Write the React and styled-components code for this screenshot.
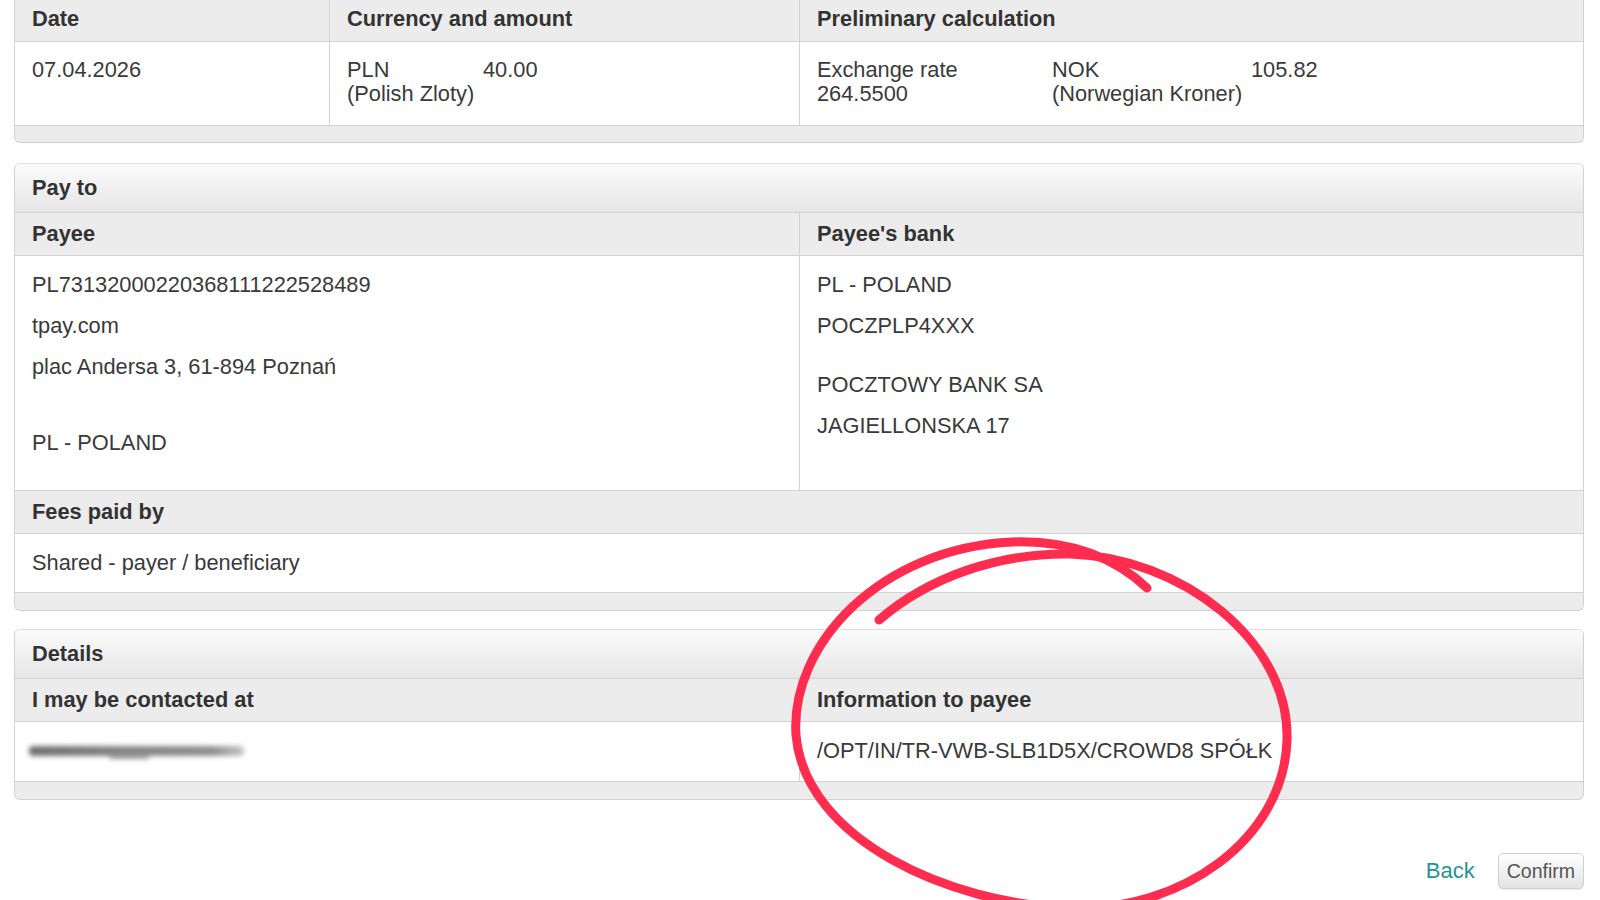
import React from "react";
import styled, { createGlobalStyle } from "styled-components";

const Global = createGlobalStyle`
  html, body { margin: 0; padding: 0; background: #ffffff; }
  body {
    font-family: "Liberation Sans", Arial, Helvetica, sans-serif;
    font-size: 21.8px;
    color: #383838;
  }
`;

const Page = styled.div`
  position: relative;
  box-sizing: border-box;
  width: 1600px;
  height: 900px;
  overflow: hidden;
  padding: 0 16px 0 14px;
  line-height: 24px;
`;

const Panel = styled.section`
  border: 1px solid #d2d2d2;
  border-top: ${(p) => (p.$clipped ? "none" : "1px solid #dedede")};
  border-radius: ${(p) => (p.$clipped ? "0 0 6px 6px" : "6px")};
  background: #ececec;
  overflow: hidden;
  margin-top: ${(p) => p.$gap || 0}px;
`;

const PanelTitle = styled.div`
  padding: 12px 17px 12px;
  background: linear-gradient(#fbfbfb, #e6e6e6);
  border-bottom: 1px solid #d2d2d2;
  font-weight: bold;
  color: #333;
`;

const Row = styled.div`
  display: grid;
  grid-template-columns: ${(p) => p.$cols || "1fr"};
  border-bottom: 1px solid #d2d2d2;
  background: ${(p) => (p.$head ? "#ececec" : "#ffffff")};
  font-weight: ${(p) => (p.$head ? "bold" : "normal")};
  color: ${(p) => (p.$head ? "#333" : "#3a3a3a")};
`;

const Cell = styled.div`
  padding: ${(p) => p.$pad || "9px 17px"};
  display: flex;
  flex-direction: column;
  justify-content: ${(p) => (p.$center ? "center" : "flex-start")};
  gap: ${(p) => p.$gap || 0}px;
  & + & {
    border-left: 1px solid #d2d2d2;
  }
`;

const Footer = styled.div`
  height: ${(p) => p.$h || 16}px;
`;

const Pair = styled.div`
  display: grid;
  grid-template-columns: ${(p) => p.$cols};
`;

const Line = styled.div`
  white-space: nowrap;
`;

const Spacer = styled.div`
  height: ${(p) => p.$h}px;
`;

const BlurWrap = styled.div`
  position: relative;
  width: 215px;
  height: 16px;
  margin-left: -3px;
  filter: blur(2.6px);
`;

const BlurBar = styled.span`
  display: block;
  height: 10px;
  margin-top: 3px;
  border-radius: 4px;
  background: linear-gradient(90deg, #707070, #858585 45%, #8e8e8e 85%, #c6c6c6);
`;

const BlurDot = styled.span`
  position: absolute;
  left: 80px;
  top: 11px;
  width: 40px;
  height: 5px;
  border-radius: 3px;
  background: #9a9a9a;
`;

const Actions = styled.div`
  margin-top: 53px;
  display: flex;
  justify-content: flex-end;
  align-items: center;
  gap: 23px;
`;

const BackLink = styled.a`
  color: #23968f;
  font-size: 22px;
  text-decoration: none;
  cursor: pointer;
`;

const ConfirmButton = styled.button`
  height: 36px;
  padding: 0 8px;
  font-family: "Liberation Sans", Arial, sans-serif;
  font-size: 19.5px;
  color: #555;
  border: 1px solid #d0d0d0;
  border-radius: 5px;
  background: linear-gradient(#ffffff, #e3e3e3);
  box-shadow: 0 1px 1px rgba(0, 0, 0, 0.08);
`;

const Overlay = styled.svg`
  position: absolute;
  left: 0;
  top: 0;
  width: 1600px;
  height: 900px;
  pointer-events: none;
`;

export default function App() {
  return (
    <>
      <Global />
      <Page>
        <Panel $clipped>
          <Row $head $cols="314px 470px 1fr">
            <Cell $pad="7px 17px 10px">Date</Cell>
            <Cell $pad="7px 17px 10px">Currency and amount</Cell>
            <Cell $pad="7px 17px 10px">Preliminary calculation</Cell>
          </Row>
          <Row $cols="314px 470px 1fr">
            <Cell $pad="16px 17px 19px">
              <Line>07.04.2026</Line>
            </Cell>
            <Cell $pad="16px 17px 19px">
              <Pair $cols="136px auto">
                <div>
                  <Line>PLN</Line>
                  <Line>(Polish Zloty)</Line>
                </div>
                <Line>40.00</Line>
              </Pair>
            </Cell>
            <Cell $pad="16px 17px 19px">
              <Pair $cols="235px 199px auto">
                <div>
                  <Line>Exchange rate</Line>
                  <Line>264.5500</Line>
                </div>
                <div>
                  <Line>NOK</Line>
                  <Line>(Norwegian Kroner)</Line>
                </div>
                <Line>105.82</Line>
              </Pair>
            </Cell>
          </Row>
          <Footer $h={16} />
        </Panel>

        <Panel $gap={20}>
          <PanelTitle>Pay to</PanelTitle>
          <Row $head $cols="1fr 1fr">
            <Cell>Payee</Cell>
            <Cell>Payee's bank</Cell>
          </Row>
          <Row $cols="1fr 1fr">
            <Cell $pad="17px 17px 35px" $gap={17}>
              <Line>PL73132000220368111222528489</Line>
              <Line>tpay.com</Line>
              <Line>plac Andersa 3, 61-894 Poznań</Line>
              <Spacer $h={18} />
              <Line>PL - POLAND</Line>
            </Cell>
            <Cell $pad="17px 17px 35px" $gap={17}>
              <Line>PL - POLAND</Line>
              <Line>POCZPLP4XXX</Line>
              <Spacer $h={1} />
              <Line>POCZTOWY BANK SA</Line>
              <Line>JAGIELLONSKA 17</Line>
            </Cell>
          </Row>
          <Row $head>
            <Cell>Fees paid by</Cell>
          </Row>
          <Row>
            <Cell $pad="17px 17px">
              <Line>Shared - payer / beneficiary</Line>
            </Cell>
          </Row>
          <Footer $h={17} />
        </Panel>

        <Panel $gap={18}>
          <PanelTitle>Details</PanelTitle>
          <Row $head $cols="1fr 1fr">
            <Cell>I may be contacted at</Cell>
            <Cell>Information to payee</Cell>
          </Row>
          <Row $cols="1fr 1fr">
            <Cell $pad="17px 17px 18px" $center>
              <BlurWrap>
                <BlurBar />
                <BlurDot />
              </BlurWrap>
            </Cell>
            <Cell $pad="17px 17px 18px">
              <Line>/OPT/IN/TR-VWB-SLB1D5X/CROWD8 SPÓŁK</Line>
            </Cell>
          </Row>
          <Footer $h={17} />
        </Panel>

        <Actions>
          <BackLink>Back</BackLink>
          <ConfirmButton>Confirm</ConfirmButton>
        </Actions>

        <Overlay viewBox="0 0 1600 900">
          <path
            d="M 879 620 C 930 576, 1000 553, 1070 554 C 1180 557, 1290 640, 1287 740 C 1284 840, 1180 912, 1070 908 C 950 904, 805 840, 796 735 C 790 645, 880 548, 1012 542 C 1072 540, 1115 558, 1147 588"
            fill="none"
            stroke="#fe2d4f"
            strokeWidth="9"
            strokeLinecap="round"
            strokeLinejoin="round"
          />
        </Overlay>
      </Page>
    </>
  );
}
